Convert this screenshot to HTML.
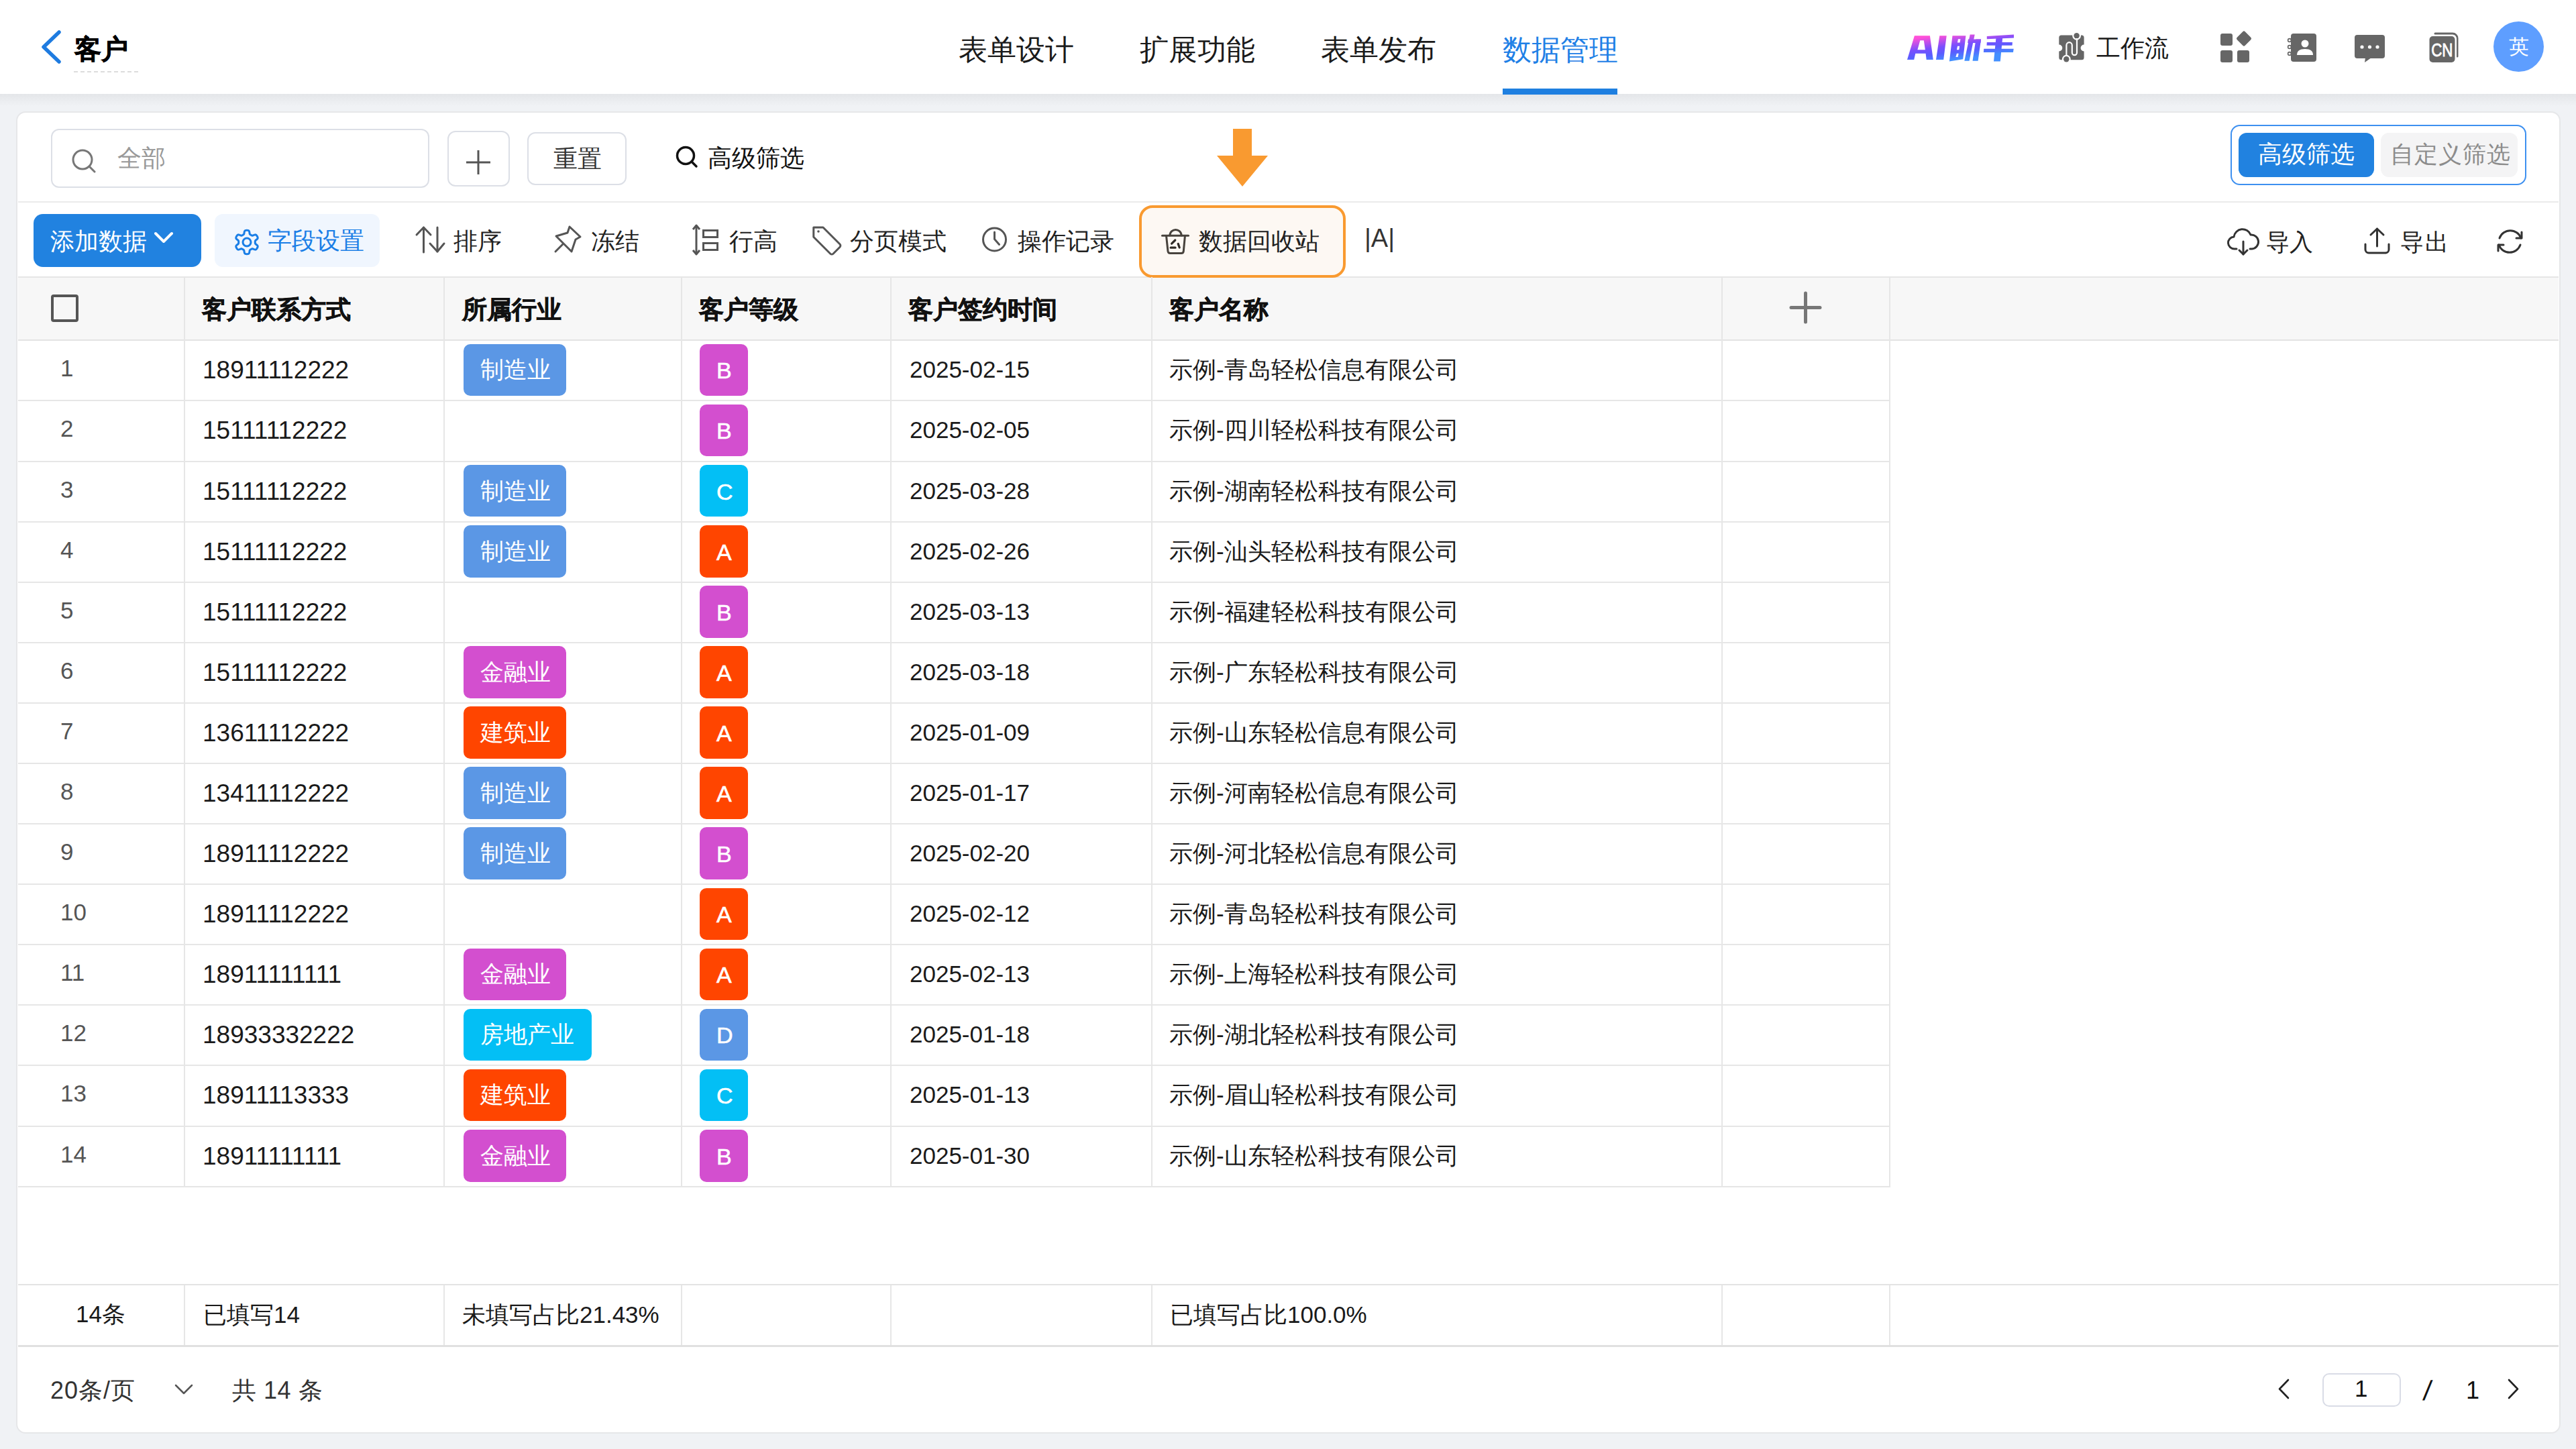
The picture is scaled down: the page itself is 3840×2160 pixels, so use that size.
<!DOCTYPE html>
<html><head><meta charset="utf-8"><title>客户 - 数据管理</title>
<style>
html,body{margin:0;padding:0;}
body{width:3840px;height:2160px;position:relative;overflow:hidden;background:#f0f2f5;font-family:'Liberation Sans',sans-serif;}
.t{position:absolute;white-space:nowrap;}
svg{overflow:visible;}
</style></head><body>
<div style="position:absolute;left:0px;top:0px;width:3840px;height:140px;background:#fff;"></div>
<div style="position:absolute;left:0px;top:140px;width:3840px;height:18px;background:linear-gradient(#e4e6e9,#f0f2f5);"></div>
<svg style="position:absolute;left:55px;top:40px" width="45" height="60" viewBox="0 0 45 60"><polyline points="33,8 10,30 33,52" fill="none" stroke="#1e7be0" stroke-width="5.5" stroke-linecap="round" stroke-linejoin="round"/></svg>
<div class="t" style="left:111px;top:53px;font-size:40px;line-height:40px;color:#000;font-weight:bold;-webkit-text-stroke:0.7px currentColor;">客户</div>
<div style="position:absolute;left:110px;top:106px;width:97px;height:2px;background:repeating-linear-gradient(90deg,#dcdcdc 0 6px,transparent 6px 10px);"></div>
<div class="t" style="left:1429px;top:53px;font-size:43px;line-height:43px;color:#1a1a1a;">表单设计</div>
<div class="t" style="left:1699px;top:53px;font-size:43px;line-height:43px;color:#1a1a1a;">扩展功能</div>
<div class="t" style="left:1969px;top:53px;font-size:43px;line-height:43px;color:#1a1a1a;">表单发布</div>
<div class="t" style="left:2240px;top:53px;font-size:43px;line-height:43px;color:#1e80e6;">数据管理</div>
<div style="position:absolute;left:2240px;top:132px;width:171px;height:9px;background:#1e7fe0;"></div>
<svg style="position:absolute;left:2835px;top:40px" width="180" height="60" viewBox="0 0 180 60"><defs><linearGradient id="aig" gradientUnits="userSpaceOnUse" x1="60" y1="12" x2="65" y2="51"><stop offset="0" stop-color="#ff50d8"/><stop offset="0.45" stop-color="#7a4ffd"/><stop offset="0.7" stop-color="#5a5cff"/><stop offset="1" stop-color="#4390ff"/></linearGradient></defs><path fill="url(#aig)" fill-rule="evenodd" d="M8.0 48.9 L18.9 13.3 L41.9 13.3 L46.8 48.9 L36.7 48.9 L35.6 39.8 L20.3 39.8 L18.2 48.9ZM27.3 20.3 L32.8 20.3 L34.9 34.2 L23.4 34.2Z"/><path fill="url(#aig)" fill-rule="evenodd" d="M56.3 13.3 L66.7 13.3 L62.2 48.9 L51.0 48.9Z"/><path fill="url(#aig)" fill-rule="evenodd" d="M75.5 13.3 L95.4 13.3 L91.2 48.2 L70.9 51.4ZM83.9 18.2 L87.5 18.2 L86.5 23.4 L82.9 23.4ZM83.0 28.7 L86.1 28.7 L85.3 34.2 L81.9 34.2ZM81.9 39.8 L84.7 39.8 L83.6 45.1 L80.4 45.1Z"/><path fill="url(#aig)" fill-rule="evenodd" d="M101.7 11.5 L108.7 11.5 L100.6 50.7 L93.3 50.7Z"/><path fill="url(#aig)" fill-rule="evenodd" d="M98.9 18.5 L118.1 18.5 L117.4 24.1 L98.2 24.1Z"/><path fill="url(#aig)" fill-rule="evenodd" d="M110.4 18.5 L118.1 18.5 L113.6 50.7 L105.5 50.7Z"/><path fill="url(#aig)" fill-rule="evenodd" d="M126.8 14.0 L167.0 11.5 L167.0 16.4 L126.8 18.3Z"/><path fill="url(#aig)" fill-rule="evenodd" d="M126.8 23.1 L164.9 23.1 L164.6 27.8 L126.5 27.8Z"/><path fill="url(#aig)" fill-rule="evenodd" d="M122.3 32.8 L166.7 32.8 L166.0 37.9 L121.9 37.9Z"/><path fill="url(#aig)" fill-rule="evenodd" d="M140.5 16.1 L150.2 16.1 L146.8 51.4 L137.0 51.4Z"/></svg>
<svg style="position:absolute;left:3068px;top:47px" width="44" height="50" viewBox="0 0 44 50"><path d="M4.8 5.4 H35.1 a3.5 3.5 0 0 1 3.5 3.5 V19.5 a5 5 0 0 0 0 10 V38.8 a3.5 3.5 0 0 1 -3.5 3.5 H4.8 a3.5 3.5 0 0 1 -3.5 -3.5 V29.5 a5 5 0 0 0 0 -10 V8.9 a3.5 3.5 0 0 1 3.5 -3.5Z" fill="#666"/><circle cx="27.6" cy="6.3" r="6.4" fill="#fff"/><circle cx="12.3" cy="41.2" r="6.4" fill="#fff"/><circle cx="27.6" cy="6.3" r="4.2" fill="#666"/><circle cx="12.3" cy="41.2" r="4.2" fill="#666"/><path d="M28 10 V31.6 a3.6 3.6 0 0 1 -7.2 0 V20.4 a4.2 4.2 0 0 0 -8.4 0 V37" fill="none" stroke="#fff" stroke-width="2.2"/></svg>
<div class="t" style="left:3125px;top:54px;font-size:36px;line-height:36px;color:#1a1a1a;">工作流</div>
<svg style="position:absolute;left:3308px;top:44px" width="52" height="52" viewBox="0 0 52 52"><rect x="2" y="6" width="18" height="18" rx="3" fill="#666"/><rect x="2" y="31" width="18" height="18" rx="3" fill="#666"/><rect x="27" y="31" width="18" height="18" rx="3" fill="#666"/><rect x="28.5" y="5" width="17" height="17" rx="2.5" transform="rotate(45 37 13.5)" fill="#666"/></svg>
<svg style="position:absolute;left:3409px;top:48px" width="48" height="48" viewBox="0 0 48 48"><rect x="6" y="2" width="38" height="42" rx="4" fill="#666"/><circle cx="4" cy="12" r="2.4" fill="none" stroke="#666" stroke-width="1.6"/><circle cx="4" cy="22" r="2.4" fill="none" stroke="#666" stroke-width="1.6"/><circle cx="4" cy="32" r="2.4" fill="none" stroke="#666" stroke-width="1.6"/><circle cx="27" cy="17" r="5.5" fill="#fff"/><path d="M15 34 q0 -9 12 -9 q12 0 12 9 z" fill="#fff"/></svg>
<svg style="position:absolute;left:3508px;top:50px" width="50" height="46" viewBox="0 0 50 46"><rect x="2" y="2" width="45" height="35" rx="4" fill="#666"/><path d="M18 36 l-1 7 l10 -7z" fill="#666"/><circle cx="13" cy="20" r="2.6" fill="#fff"/><circle cx="24.5" cy="20" r="2.6" fill="#fff"/><circle cx="36" cy="20" r="2.6" fill="#fff"/></svg>
<svg style="position:absolute;left:3619px;top:45px" width="50" height="52" viewBox="0 0 50 52"><path d="M11 5 h26 a7 7 0 0 1 7 7 v27" fill="none" stroke="#666" stroke-width="3" stroke-linecap="round"/><rect x="1" y="7" width="42" height="43" rx="6" fill="#fff"/><rect x="2.5" y="9" width="38" height="39" rx="5" fill="#666"/><text x="0" y="0" font-family="Liberation Sans" font-size="28" fill="#fff" stroke="#fff" stroke-width="0.8" text-anchor="middle" transform="translate(21.3 39) scale(0.8 1)">CN</text></svg>
<div style="position:absolute;left:3717px;top:32px;width:75px;height:75px;background:#5e9eff;border-radius:50%;"></div>
<div class="t" style="left:3740px;top:55px;font-size:30px;line-height:30px;color:#fff;">英</div>
<div style="position:absolute;left:24px;top:166px;width:3793px;height:1971px;background:#fff;border:2px solid #e6e7e9;border-radius:14px;box-sizing:border-box;"></div>
<div style="position:absolute;left:76px;top:192px;width:564px;height:88px;border:2px solid #dcdfe6;border-radius:12px;box-sizing:border-box;"></div>
<svg style="position:absolute;left:104px;top:219px" width="42" height="42" viewBox="0 0 42 42"><circle cx="19" cy="19" r="14" fill="none" stroke="#777" stroke-width="3"/><line x1="29" y1="29" x2="37" y2="37" stroke="#777" stroke-width="3" stroke-linecap="round"/></svg>
<div class="t" style="left:175px;top:218px;font-size:36px;line-height:36px;color:#999;">全部</div>
<div style="position:absolute;left:667px;top:195px;width:93px;height:83px;border:2px solid #dcdfe6;border-radius:12px;box-sizing:border-box;"></div>
<svg style="position:absolute;left:690px;top:220px" width="46" height="46" viewBox="0 0 46 46"><line x1="5" y1="22" x2="41" y2="22" stroke="#555" stroke-width="3"/><line x1="23" y1="4" x2="23" y2="40" stroke="#555" stroke-width="3"/></svg>
<div style="position:absolute;left:786px;top:197px;width:148px;height:79px;border:2px solid #dcdfe6;border-radius:12px;box-sizing:border-box;"></div>
<div class="t" style="left:825px;top:219px;font-size:36px;line-height:36px;color:#333;">重置</div>
<svg style="position:absolute;left:1005px;top:215px" width="40" height="40" viewBox="0 0 40 40"><circle cx="17" cy="17" r="12.5" fill="none" stroke="#111" stroke-width="3.5"/><line x1="26" y1="26" x2="33" y2="33" stroke="#111" stroke-width="3.5" stroke-linecap="round"/></svg>
<div class="t" style="left:1055px;top:218px;font-size:36px;line-height:36px;color:#111;">高级筛选</div>
<div style="position:absolute;left:3325px;top:186px;width:441px;height:90px;border:2px solid #3d90f0;border-radius:14px;box-sizing:border-box;"></div>
<div style="position:absolute;left:3337px;top:198px;width:202px;height:66px;background:#2182e0;border-radius:12px;"></div>
<div class="t" style="left:3366px;top:212px;font-size:36px;line-height:36px;color:#fff;">高级筛选</div>
<div style="position:absolute;left:3549px;top:198px;width:204px;height:66px;background:#f4f4f5;border-radius:12px;"></div>
<div class="t" style="left:3563px;top:212px;font-size:35px;line-height:35px;color:#8c8c8c;letter-spacing:1px;">自定义筛选</div>
<div style="position:absolute;left:27px;top:300px;width:3787px;height:2px;background:#ebebeb;"></div>
<div style="position:absolute;left:27px;top:413px;width:3787px;height:94px;background:#f7f7f7;"></div>
<div style="position:absolute;left:27px;top:412px;width:3787px;height:2px;background:#e6e6e6;"></div>
<div style="position:absolute;left:27px;top:506px;width:3787px;height:2px;background:#e3e3e3;"></div>
<div style="position:absolute;left:50px;top:319px;width:250px;height:79px;background:#2182e0;border-radius:14px;"></div>
<div class="t" style="left:75px;top:342px;font-size:36px;line-height:36px;color:#fff;">添加数据</div>
<svg style="position:absolute;left:226px;top:340px" width="36" height="30" viewBox="0 0 36 30"><polyline points="6,8 18,20 30,8" fill="none" stroke="#fff" stroke-width="4" stroke-linecap="round" stroke-linejoin="round"/></svg>
<div style="position:absolute;left:320px;top:319px;width:246px;height:79px;background:#f0f6fe;border-radius:12px;"></div>
<svg style="position:absolute;left:349px;top:342px" width="38" height="38" viewBox="0 0 38 38"><path d="M19.00 1.30 L19.62 1.32 L20.23 1.37 L20.84 1.48 L21.43 1.68 L21.99 2.05 L22.46 2.73 L22.78 3.84 L22.96 5.18 L23.13 6.29 L23.37 6.99 L23.69 7.40 L24.04 7.68 L24.41 7.92 L24.78 8.13 L25.15 8.35 L25.52 8.56 L25.90 8.78 L26.28 8.98 L26.70 9.14 L27.22 9.21 L27.94 9.07 L28.99 8.66 L30.24 8.15 L31.36 7.87 L32.19 7.93 L32.78 8.23 L33.25 8.65 L33.65 9.12 L34.00 9.62 L34.33 10.15 L34.62 10.69 L34.88 11.25 L35.09 11.84 L35.22 12.45 L35.18 13.11 L34.82 13.86 L34.02 14.69 L32.95 15.52 L32.07 16.22 L31.59 16.78 L31.39 17.26 L31.32 17.71 L31.30 18.14 L31.30 18.57 L31.30 19.00 L31.30 19.43 L31.30 19.86 L31.32 20.29 L31.39 20.74 L31.59 21.22 L32.07 21.78 L32.95 22.48 L34.02 23.31 L34.82 24.14 L35.18 24.89 L35.22 25.55 L35.09 26.16 L34.88 26.75 L34.62 27.31 L34.33 27.85 L34.00 28.38 L33.65 28.88 L33.25 29.35 L32.78 29.77 L32.19 30.07 L31.36 30.13 L30.24 29.85 L28.99 29.34 L27.94 28.93 L27.22 28.79 L26.70 28.86 L26.28 29.02 L25.90 29.22 L25.52 29.44 L25.15 29.65 L24.78 29.87 L24.41 30.08 L24.04 30.32 L23.69 30.60 L23.37 31.01 L23.13 31.71 L22.96 32.82 L22.78 34.16 L22.46 35.27 L21.99 35.95 L21.43 36.32 L20.84 36.52 L20.23 36.63 L19.62 36.68 L19.00 36.70 L18.38 36.68 L17.77 36.63 L17.16 36.52 L16.57 36.32 L16.01 35.95 L15.54 35.27 L15.22 34.16 L15.04 32.82 L14.87 31.71 L14.63 31.01 L14.31 30.60 L13.96 30.32 L13.59 30.08 L13.22 29.87 L12.85 29.65 L12.48 29.44 L12.10 29.22 L11.72 29.02 L11.30 28.86 L10.78 28.79 L10.06 28.93 L9.01 29.34 L7.76 29.85 L6.64 30.13 L5.81 30.07 L5.22 29.77 L4.75 29.35 L4.35 28.88 L4.00 28.38 L3.67 27.85 L3.38 27.31 L3.12 26.75 L2.91 26.16 L2.78 25.55 L2.82 24.89 L3.18 24.14 L3.98 23.31 L5.05 22.48 L5.93 21.78 L6.41 21.22 L6.61 20.74 L6.68 20.29 L6.70 19.86 L6.70 19.43 L6.70 19.00 L6.70 18.57 L6.70 18.14 L6.68 17.71 L6.61 17.26 L6.41 16.78 L5.93 16.22 L5.05 15.52 L3.98 14.69 L3.18 13.86 L2.82 13.11 L2.78 12.45 L2.91 11.84 L3.12 11.25 L3.38 10.69 L3.67 10.15 L4.00 9.62 L4.35 9.12 L4.75 8.65 L5.22 8.23 L5.81 7.93 L6.64 7.87 L7.76 8.15 L9.01 8.66 L10.06 9.07 L10.78 9.21 L11.30 9.14 L11.72 8.98 L12.10 8.78 L12.48 8.56 L12.85 8.35 L13.22 8.13 L13.59 7.92 L13.96 7.68 L14.31 7.40 L14.63 6.99 L14.87 6.29 L15.04 5.18 L15.22 3.84 L15.54 2.73 L16.01 2.05 L16.57 1.68 L17.16 1.48 L17.77 1.37 L18.38 1.32 L19.00 1.30Z" fill="none" stroke="#1a7ee6" stroke-width="3" stroke-linejoin="round"/><circle cx="19" cy="19" r="6" fill="none" stroke="#1a7ee6" stroke-width="3"/></svg>
<div class="t" style="left:399px;top:341px;font-size:36px;line-height:36px;color:#1a7ee6;">字段设置</div>
<svg style="position:absolute;left:618px;top:336px" width="48" height="44" viewBox="0 0 48 44"><g fill="none" stroke="#555" stroke-width="3" stroke-linecap="round" stroke-linejoin="round"><polyline points="3,14 13.5,3 24,14"/><line x1="13.5" y1="3" x2="13.5" y2="40"/><polyline points="23,27 34,39 44,27"/><line x1="34" y1="3" x2="34" y2="39"/></g></svg>
<div class="t" style="left:676px;top:342px;font-size:36px;line-height:36px;color:#222;">排序</div>
<svg style="position:absolute;left:825px;top:335px" width="44" height="44" viewBox="0 0 44 44"><g fill="none" stroke="#555" stroke-width="3" stroke-linejoin="round" stroke-linecap="round"><path d="M24 3 L40 18 L33 22 L27 40 L4 17 L21 12 Z"/><line x1="14" y1="29" x2="3" y2="40"/></g></svg>
<div class="t" style="left:881px;top:342px;font-size:36px;line-height:36px;color:#222;">冻结</div>
<svg style="position:absolute;left:1030px;top:333px" width="44" height="50" viewBox="0 0 44 50"><g fill="none" stroke="#555" stroke-width="3"><line x1="8" y1="3" x2="8" y2="46"/><polyline points="3,9 8,3 13,9" stroke-linejoin="round"/><polyline points="3,40 8,46 13,40" stroke-linejoin="round"/><rect x="18.5" y="10.5" width="21" height="10"/><rect x="18.5" y="29.5" width="21" height="10"/></g></svg>
<div class="t" style="left:1087px;top:342px;font-size:36px;line-height:36px;color:#222;">行高</div>
<svg style="position:absolute;left:1209px;top:335px" width="48" height="48" viewBox="0 0 48 48"><g fill="none" stroke="#555" stroke-width="3" stroke-linejoin="round"><path d="M5 4 h13 l25 25 a3 3 0 0 1 0 4.2 l-10 10 a3 3 0 0 1 -4.2 0 l-25 -25 v-14.2z" transform="rotate(0)"/></g><circle cx="11" cy="10" r="1.8" fill="#555"/></svg>
<div class="t" style="left:1267px;top:342px;font-size:36px;line-height:36px;color:#222;">分页模式</div>
<svg style="position:absolute;left:1462px;top:337px" width="42" height="42" viewBox="0 0 42 42"><circle cx="20.5" cy="20" r="17" fill="none" stroke="#555" stroke-width="3"/><polyline points="20.5,9 20.5,19.5 27.5,27.5" fill="none" stroke="#555" stroke-width="3" stroke-linecap="round"/></svg>
<div class="t" style="left:1517px;top:342px;font-size:36px;line-height:36px;color:#222;">操作记录</div>
<div style="position:absolute;left:1698px;top:306px;width:308px;height:108px;border:4px solid #f99a30;border-radius:20px;background:#fdf8f3;box-sizing:border-box;"></div>
<svg style="position:absolute;left:1730px;top:338px" width="44" height="44" viewBox="0 0 44 44"><g fill="none" stroke="#48433d" stroke-width="3" stroke-linecap="round" stroke-linejoin="round"><line x1="2.5" y1="13.2" x2="41.5" y2="13.2"/><path d="M13.8 13 C14.5 1.5 30.5 1.5 31.2 13"/><path d="M8.6 14 L11 36.5 Q11.4 39.4 14.4 39.4 H31 Q34 39.4 34.3 36.5 L36.4 14"/></g><g fill="none" stroke="#2f2a25" stroke-width="3.2" stroke-linecap="round"><path d="M16.6 25.2 L21.8 20"/><path d="M26.2 25.4 L28.2 31"/><path d="M15.2 31.2 H22"/></g></svg>
<div class="t" style="left:1787px;top:342px;font-size:36px;line-height:36px;color:#222;">数据回收站</div>
<div class="t" style="left:2034px;top:336px;font-size:38px;line-height:38px;color:#333;">|A|</div>
<svg style="position:absolute;left:1810px;top:190px" width="84" height="92" viewBox="0 0 84 92"><path d="M28 2 H56 V42 H80 L42 88 L4 42 H28 Z" fill="#f99a30"/></svg>
<svg style="position:absolute;left:3320px;top:338px" width="50" height="46" viewBox="0 0 50 46"><g fill="none" stroke="#333" stroke-width="3" stroke-linecap="round" stroke-linejoin="round"><path d="M14 33 H11 a9 9 0 0 1 -1 -18 a13 13 0 0 1 25 -3 a9 9 0 0 1 2 21 H34"/><line x1="24" y1="22" x2="24" y2="41"/><polyline points="18,35 24,41 30,35"/></g></svg>
<div class="t" style="left:3378px;top:343px;font-size:35px;line-height:35px;color:#222;">导入</div>
<svg style="position:absolute;left:3523px;top:337px" width="44" height="44" viewBox="0 0 44 44"><g fill="none" stroke="#333" stroke-width="3" stroke-linecap="round" stroke-linejoin="round"><path d="M3 27 V35 a5 5 0 0 0 5 5 H33 a5 5 0 0 0 5 -5 V27"/><line x1="20.5" y1="4" x2="20.5" y2="30"/><polyline points="11,13 20.5,4 30,13"/></g></svg>
<div class="t" style="left:3578px;top:343px;font-size:35px;line-height:35px;color:#222;letter-spacing:2px;">导出</div>
<svg style="position:absolute;left:3720px;top:339px" width="46" height="46" viewBox="0 0 46 46"><g fill="none" stroke="#333" stroke-width="3" stroke-linecap="round" stroke-linejoin="round"><path d="M38 16 a17 17 0 0 0 -32 0"/><path d="M5 26 a17 17 0 0 0 32 0"/><polyline points="39,7 39,16 31,16" /><polyline points="4,35 4,26 12,26"/></g></svg>
<div style="position:absolute;left:76px;top:439px;width:41px;height:41px;border:4px solid #555;border-radius:4px;box-sizing:border-box;"></div>
<div class="t" style="left:301px;top:443px;font-size:37px;line-height:37px;color:#111;font-weight:bold;-webkit-text-stroke:0.7px currentColor;">客户联系方式</div>
<div class="t" style="left:689px;top:443px;font-size:37px;line-height:37px;color:#111;font-weight:bold;-webkit-text-stroke:0.7px currentColor;">所属行业</div>
<div class="t" style="left:1042px;top:443px;font-size:37px;line-height:37px;color:#111;font-weight:bold;-webkit-text-stroke:0.7px currentColor;">客户等级</div>
<div class="t" style="left:1354px;top:443px;font-size:37px;line-height:37px;color:#111;font-weight:bold;-webkit-text-stroke:0.7px currentColor;">客户签约时间</div>
<div class="t" style="left:1743px;top:443px;font-size:37px;line-height:37px;color:#111;font-weight:bold;-webkit-text-stroke:0.7px currentColor;">客户名称</div>
<svg style="position:absolute;left:2666px;top:434px" width="52" height="52" viewBox="0 0 52 52"><g stroke="#777" stroke-width="5" stroke-linecap="round"><line x1="4" y1="24.5" x2="47" y2="24.5"/><line x1="25.5" y1="3" x2="25.5" y2="46"/></g></svg>
<div style="position:absolute;left:27px;top:596px;width:2791px;height:2px;background:#e6e6e6;"></div>
<div class="t" style="left:90px;top:531px;font-size:35px;line-height:35px;color:#555;">1</div>
<div class="t" style="left:302px;top:533px;font-size:37px;line-height:37px;color:#1a1a1a;">18911112222</div>
<div style="position:absolute;left:691px;top:513px;width:153px;height:77px;background:#5b97e5;border-radius:10px;"></div>
<div class="t" style="left:716px;top:533px;font-size:35px;line-height:35px;color:#fff;">制造业</div>
<div style="position:absolute;left:1043px;top:513px;width:72px;height:77px;background:#d34fcf;border-radius:10px;"></div>
<div class="t" style="left:1068px;top:535px;font-size:34px;line-height:34px;color:#fff;-webkit-text-stroke:0.6px #fff;">B</div>
<div class="t" style="left:1356px;top:533px;font-size:35px;line-height:35px;color:#1a1a1a;">2025-02-15</div>
<div class="t" style="left:1743px;top:533px;font-size:35px;line-height:35px;color:#1a1a1a;">示例-青岛轻松信息有限公司</div>
<div style="position:absolute;left:27px;top:687px;width:2791px;height:2px;background:#e6e6e6;"></div>
<div class="t" style="left:90px;top:621px;font-size:35px;line-height:35px;color:#555;">2</div>
<div class="t" style="left:302px;top:623px;font-size:37px;line-height:37px;color:#1a1a1a;">15111112222</div>
<div style="position:absolute;left:1043px;top:603px;width:72px;height:77px;background:#d34fcf;border-radius:10px;"></div>
<div class="t" style="left:1068px;top:625px;font-size:34px;line-height:34px;color:#fff;-webkit-text-stroke:0.6px #fff;">B</div>
<div class="t" style="left:1356px;top:623px;font-size:35px;line-height:35px;color:#1a1a1a;">2025-02-05</div>
<div class="t" style="left:1743px;top:623px;font-size:35px;line-height:35px;color:#1a1a1a;">示例-四川轻松科技有限公司</div>
<div style="position:absolute;left:27px;top:777px;width:2791px;height:2px;background:#e6e6e6;"></div>
<div class="t" style="left:90px;top:712px;font-size:35px;line-height:35px;color:#555;">3</div>
<div class="t" style="left:302px;top:714px;font-size:37px;line-height:37px;color:#1a1a1a;">15111112222</div>
<div style="position:absolute;left:691px;top:693px;width:153px;height:77px;background:#5b97e5;border-radius:10px;"></div>
<div class="t" style="left:716px;top:714px;font-size:35px;line-height:35px;color:#fff;">制造业</div>
<div style="position:absolute;left:1043px;top:693px;width:72px;height:77px;background:#03bff5;border-radius:10px;"></div>
<div class="t" style="left:1068px;top:716px;font-size:34px;line-height:34px;color:#fff;-webkit-text-stroke:0.6px #fff;">C</div>
<div class="t" style="left:1356px;top:714px;font-size:35px;line-height:35px;color:#1a1a1a;">2025-03-28</div>
<div class="t" style="left:1743px;top:714px;font-size:35px;line-height:35px;color:#1a1a1a;">示例-湖南轻松科技有限公司</div>
<div style="position:absolute;left:27px;top:867px;width:2791px;height:2px;background:#e6e6e6;"></div>
<div class="t" style="left:90px;top:802px;font-size:35px;line-height:35px;color:#555;">4</div>
<div class="t" style="left:302px;top:804px;font-size:37px;line-height:37px;color:#1a1a1a;">15111112222</div>
<div style="position:absolute;left:691px;top:783px;width:153px;height:78px;background:#5b97e5;border-radius:10px;"></div>
<div class="t" style="left:716px;top:804px;font-size:35px;line-height:35px;color:#fff;">制造业</div>
<div style="position:absolute;left:1043px;top:783px;width:72px;height:78px;background:#ff4500;border-radius:10px;"></div>
<div class="t" style="left:1068px;top:806px;font-size:34px;line-height:34px;color:#fff;-webkit-text-stroke:0.6px #fff;">A</div>
<div class="t" style="left:1356px;top:804px;font-size:35px;line-height:35px;color:#1a1a1a;">2025-02-26</div>
<div class="t" style="left:1743px;top:804px;font-size:35px;line-height:35px;color:#1a1a1a;">示例-汕头轻松科技有限公司</div>
<div style="position:absolute;left:27px;top:957px;width:2791px;height:2px;background:#e6e6e6;"></div>
<div class="t" style="left:90px;top:892px;font-size:35px;line-height:35px;color:#555;">5</div>
<div class="t" style="left:302px;top:894px;font-size:37px;line-height:37px;color:#1a1a1a;">15111112222</div>
<div style="position:absolute;left:1043px;top:873px;width:72px;height:78px;background:#d34fcf;border-radius:10px;"></div>
<div class="t" style="left:1068px;top:896px;font-size:34px;line-height:34px;color:#fff;-webkit-text-stroke:0.6px #fff;">B</div>
<div class="t" style="left:1356px;top:894px;font-size:35px;line-height:35px;color:#1a1a1a;">2025-03-13</div>
<div class="t" style="left:1743px;top:894px;font-size:35px;line-height:35px;color:#1a1a1a;">示例-福建轻松科技有限公司</div>
<div style="position:absolute;left:27px;top:1047px;width:2791px;height:2px;background:#e6e6e6;"></div>
<div class="t" style="left:90px;top:982px;font-size:35px;line-height:35px;color:#555;">6</div>
<div class="t" style="left:302px;top:984px;font-size:37px;line-height:37px;color:#1a1a1a;">15111112222</div>
<div style="position:absolute;left:691px;top:963px;width:153px;height:78px;background:#d34fcf;border-radius:10px;"></div>
<div class="t" style="left:716px;top:984px;font-size:35px;line-height:35px;color:#fff;">金融业</div>
<div style="position:absolute;left:1043px;top:963px;width:72px;height:78px;background:#ff4500;border-radius:10px;"></div>
<div class="t" style="left:1068px;top:986px;font-size:34px;line-height:34px;color:#fff;-webkit-text-stroke:0.6px #fff;">A</div>
<div class="t" style="left:1356px;top:984px;font-size:35px;line-height:35px;color:#1a1a1a;">2025-03-18</div>
<div class="t" style="left:1743px;top:984px;font-size:35px;line-height:35px;color:#1a1a1a;">示例-广东轻松科技有限公司</div>
<div style="position:absolute;left:27px;top:1137px;width:2791px;height:2px;background:#e6e6e6;"></div>
<div class="t" style="left:90px;top:1072px;font-size:35px;line-height:35px;color:#555;">7</div>
<div class="t" style="left:302px;top:1074px;font-size:37px;line-height:37px;color:#1a1a1a;">13611112222</div>
<div style="position:absolute;left:691px;top:1053px;width:153px;height:78px;background:#ff4500;border-radius:10px;"></div>
<div class="t" style="left:716px;top:1074px;font-size:35px;line-height:35px;color:#fff;">建筑业</div>
<div style="position:absolute;left:1043px;top:1053px;width:72px;height:78px;background:#ff4500;border-radius:10px;"></div>
<div class="t" style="left:1068px;top:1076px;font-size:34px;line-height:34px;color:#fff;-webkit-text-stroke:0.6px #fff;">A</div>
<div class="t" style="left:1356px;top:1074px;font-size:35px;line-height:35px;color:#1a1a1a;">2025-01-09</div>
<div class="t" style="left:1743px;top:1074px;font-size:35px;line-height:35px;color:#1a1a1a;">示例-山东轻松信息有限公司</div>
<div style="position:absolute;left:27px;top:1227px;width:2791px;height:2px;background:#e6e6e6;"></div>
<div class="t" style="left:90px;top:1162px;font-size:35px;line-height:35px;color:#555;">8</div>
<div class="t" style="left:302px;top:1164px;font-size:37px;line-height:37px;color:#1a1a1a;">13411112222</div>
<div style="position:absolute;left:691px;top:1143px;width:153px;height:78px;background:#5b97e5;border-radius:10px;"></div>
<div class="t" style="left:716px;top:1164px;font-size:35px;line-height:35px;color:#fff;">制造业</div>
<div style="position:absolute;left:1043px;top:1143px;width:72px;height:78px;background:#ff4500;border-radius:10px;"></div>
<div class="t" style="left:1068px;top:1166px;font-size:34px;line-height:34px;color:#fff;-webkit-text-stroke:0.6px #fff;">A</div>
<div class="t" style="left:1356px;top:1164px;font-size:35px;line-height:35px;color:#1a1a1a;">2025-01-17</div>
<div class="t" style="left:1743px;top:1164px;font-size:35px;line-height:35px;color:#1a1a1a;">示例-河南轻松信息有限公司</div>
<div style="position:absolute;left:27px;top:1317px;width:2791px;height:2px;background:#e6e6e6;"></div>
<div class="t" style="left:90px;top:1252px;font-size:35px;line-height:35px;color:#555;">9</div>
<div class="t" style="left:302px;top:1254px;font-size:37px;line-height:37px;color:#1a1a1a;">18911112222</div>
<div style="position:absolute;left:691px;top:1233px;width:153px;height:78px;background:#5b97e5;border-radius:10px;"></div>
<div class="t" style="left:716px;top:1254px;font-size:35px;line-height:35px;color:#fff;">制造业</div>
<div style="position:absolute;left:1043px;top:1233px;width:72px;height:78px;background:#d34fcf;border-radius:10px;"></div>
<div class="t" style="left:1068px;top:1256px;font-size:34px;line-height:34px;color:#fff;-webkit-text-stroke:0.6px #fff;">B</div>
<div class="t" style="left:1356px;top:1254px;font-size:35px;line-height:35px;color:#1a1a1a;">2025-02-20</div>
<div class="t" style="left:1743px;top:1254px;font-size:35px;line-height:35px;color:#1a1a1a;">示例-河北轻松信息有限公司</div>
<div style="position:absolute;left:27px;top:1407px;width:2791px;height:2px;background:#e6e6e6;"></div>
<div class="t" style="left:90px;top:1342px;font-size:35px;line-height:35px;color:#555;">10</div>
<div class="t" style="left:302px;top:1344px;font-size:37px;line-height:37px;color:#1a1a1a;">18911112222</div>
<div style="position:absolute;left:1043px;top:1324px;width:72px;height:77px;background:#ff4500;border-radius:10px;"></div>
<div class="t" style="left:1068px;top:1346px;font-size:34px;line-height:34px;color:#fff;-webkit-text-stroke:0.6px #fff;">A</div>
<div class="t" style="left:1356px;top:1344px;font-size:35px;line-height:35px;color:#1a1a1a;">2025-02-12</div>
<div class="t" style="left:1743px;top:1344px;font-size:35px;line-height:35px;color:#1a1a1a;">示例-青岛轻松科技有限公司</div>
<div style="position:absolute;left:27px;top:1497px;width:2791px;height:2px;background:#e6e6e6;"></div>
<div class="t" style="left:90px;top:1432px;font-size:35px;line-height:35px;color:#555;">11</div>
<div class="t" style="left:302px;top:1434px;font-size:37px;line-height:37px;color:#1a1a1a;">18911111111</div>
<div style="position:absolute;left:691px;top:1414px;width:153px;height:77px;background:#d34fcf;border-radius:10px;"></div>
<div class="t" style="left:716px;top:1434px;font-size:35px;line-height:35px;color:#fff;">金融业</div>
<div style="position:absolute;left:1043px;top:1414px;width:72px;height:77px;background:#ff4500;border-radius:10px;"></div>
<div class="t" style="left:1068px;top:1436px;font-size:34px;line-height:34px;color:#fff;-webkit-text-stroke:0.6px #fff;">A</div>
<div class="t" style="left:1356px;top:1434px;font-size:35px;line-height:35px;color:#1a1a1a;">2025-02-13</div>
<div class="t" style="left:1743px;top:1434px;font-size:35px;line-height:35px;color:#1a1a1a;">示例-上海轻松科技有限公司</div>
<div style="position:absolute;left:27px;top:1587px;width:2791px;height:2px;background:#e6e6e6;"></div>
<div class="t" style="left:90px;top:1522px;font-size:35px;line-height:35px;color:#555;">12</div>
<div class="t" style="left:302px;top:1524px;font-size:37px;line-height:37px;color:#1a1a1a;">18933332222</div>
<div style="position:absolute;left:691px;top:1504px;width:191px;height:77px;background:#03bff5;border-radius:10px;"></div>
<div class="t" style="left:716px;top:1524px;font-size:35px;line-height:35px;color:#fff;">房地产业</div>
<div style="position:absolute;left:1043px;top:1504px;width:72px;height:77px;background:#5b97e5;border-radius:10px;"></div>
<div class="t" style="left:1068px;top:1526px;font-size:34px;line-height:34px;color:#fff;-webkit-text-stroke:0.6px #fff;">D</div>
<div class="t" style="left:1356px;top:1524px;font-size:35px;line-height:35px;color:#1a1a1a;">2025-01-18</div>
<div class="t" style="left:1743px;top:1524px;font-size:35px;line-height:35px;color:#1a1a1a;">示例-湖北轻松科技有限公司</div>
<div style="position:absolute;left:27px;top:1678px;width:2791px;height:2px;background:#e6e6e6;"></div>
<div class="t" style="left:90px;top:1612px;font-size:35px;line-height:35px;color:#555;">13</div>
<div class="t" style="left:302px;top:1614px;font-size:37px;line-height:37px;color:#1a1a1a;">18911113333</div>
<div style="position:absolute;left:691px;top:1594px;width:153px;height:77px;background:#ff4500;border-radius:10px;"></div>
<div class="t" style="left:716px;top:1614px;font-size:35px;line-height:35px;color:#fff;">建筑业</div>
<div style="position:absolute;left:1043px;top:1594px;width:72px;height:77px;background:#03bff5;border-radius:10px;"></div>
<div class="t" style="left:1068px;top:1616px;font-size:34px;line-height:34px;color:#fff;-webkit-text-stroke:0.6px #fff;">C</div>
<div class="t" style="left:1356px;top:1614px;font-size:35px;line-height:35px;color:#1a1a1a;">2025-01-13</div>
<div class="t" style="left:1743px;top:1614px;font-size:35px;line-height:35px;color:#1a1a1a;">示例-眉山轻松科技有限公司</div>
<div style="position:absolute;left:27px;top:1768px;width:2791px;height:2px;background:#e6e6e6;"></div>
<div class="t" style="left:90px;top:1703px;font-size:35px;line-height:35px;color:#555;">14</div>
<div class="t" style="left:302px;top:1705px;font-size:37px;line-height:37px;color:#1a1a1a;">18911111111</div>
<div style="position:absolute;left:691px;top:1684px;width:153px;height:78px;background:#d34fcf;border-radius:10px;"></div>
<div class="t" style="left:716px;top:1705px;font-size:35px;line-height:35px;color:#fff;">金融业</div>
<div style="position:absolute;left:1043px;top:1684px;width:72px;height:78px;background:#d34fcf;border-radius:10px;"></div>
<div class="t" style="left:1068px;top:1707px;font-size:34px;line-height:34px;color:#fff;-webkit-text-stroke:0.6px #fff;">B</div>
<div class="t" style="left:1356px;top:1705px;font-size:35px;line-height:35px;color:#1a1a1a;">2025-01-30</div>
<div class="t" style="left:1743px;top:1705px;font-size:35px;line-height:35px;color:#1a1a1a;">示例-山东轻松科技有限公司</div>
<div style="position:absolute;left:274px;top:413px;width:2px;height:1356px;background:#e6e6e6;"></div>
<div style="position:absolute;left:661px;top:413px;width:2px;height:1356px;background:#e6e6e6;"></div>
<div style="position:absolute;left:1015px;top:413px;width:2px;height:1356px;background:#e6e6e6;"></div>
<div style="position:absolute;left:1327px;top:413px;width:2px;height:1356px;background:#e6e6e6;"></div>
<div style="position:absolute;left:1716px;top:413px;width:2px;height:1356px;background:#e6e6e6;"></div>
<div style="position:absolute;left:2566px;top:413px;width:2px;height:1356px;background:#e6e6e6;"></div>
<div style="position:absolute;left:2816px;top:413px;width:2px;height:1356px;background:#e6e6e6;"></div>
<div style="position:absolute;left:27px;top:1914px;width:3787px;height:2px;background:#e3e3e3;"></div>
<div style="position:absolute;left:27px;top:2005px;width:3787px;height:3px;background:#e0e0e0;"></div>
<div style="position:absolute;left:274px;top:1916px;width:2px;height:89px;background:#e6e6e6;"></div>
<div style="position:absolute;left:661px;top:1916px;width:2px;height:89px;background:#e6e6e6;"></div>
<div style="position:absolute;left:1015px;top:1916px;width:2px;height:89px;background:#e6e6e6;"></div>
<div style="position:absolute;left:1327px;top:1916px;width:2px;height:89px;background:#e6e6e6;"></div>
<div style="position:absolute;left:1716px;top:1916px;width:2px;height:89px;background:#e6e6e6;"></div>
<div style="position:absolute;left:2566px;top:1916px;width:2px;height:89px;background:#e6e6e6;"></div>
<div style="position:absolute;left:2816px;top:1916px;width:2px;height:89px;background:#e6e6e6;"></div>
<div class="t" style="left:113px;top:1941px;font-size:35px;line-height:35px;color:#1a1a1a;">14条</div>
<div class="t" style="left:303px;top:1942px;font-size:35px;line-height:35px;color:#1a1a1a;">已填写14</div>
<div class="t" style="left:689px;top:1942px;font-size:35px;line-height:35px;color:#1a1a1a;">未填写占比21.43%</div>
<div class="t" style="left:1744px;top:1942px;font-size:35px;line-height:35px;color:#1a1a1a;">已填写占比100.0%</div>
<div class="t" style="left:75px;top:2055px;font-size:36px;line-height:36px;color:#333;letter-spacing:1px;">20条/页</div>
<svg style="position:absolute;left:258px;top:2058px" width="32" height="26" viewBox="0 0 32 26"><polyline points="4,7 16,19 28,7" fill="none" stroke="#555" stroke-width="2.5" stroke-linecap="round" stroke-linejoin="round"/></svg>
<div class="t" style="left:346px;top:2055px;font-size:36px;line-height:36px;color:#333;letter-spacing:0.5px;">共 14 条</div>
<svg style="position:absolute;left:3392px;top:2054px" width="24" height="34" viewBox="0 0 24 34"><polyline points="19,3 6,16.5 19,30" fill="none" stroke="#222" stroke-width="2.6" stroke-linecap="round" stroke-linejoin="round"/></svg>
<div style="position:absolute;left:3462px;top:2047px;width:117px;height:50px;border:2px solid #d9dce6;border-radius:10px;box-sizing:border-box;"></div>
<div class="t" style="left:3510px;top:2052px;font-size:35px;line-height:35px;color:#111;">1</div>
<div class="t" style="left:3613px;top:2053px;font-size:41px;line-height:41px;color:#111;transform:skewX(-8deg);">/</div>
<div class="t" style="left:3676px;top:2055px;font-size:36px;line-height:36px;color:#111;">1</div>
<svg style="position:absolute;left:3735px;top:2054px" width="24" height="34" viewBox="0 0 24 34"><polyline points="5,3 18,16.5 5,30" fill="none" stroke="#222" stroke-width="2.6" stroke-linecap="round" stroke-linejoin="round"/></svg>
</body></html>
